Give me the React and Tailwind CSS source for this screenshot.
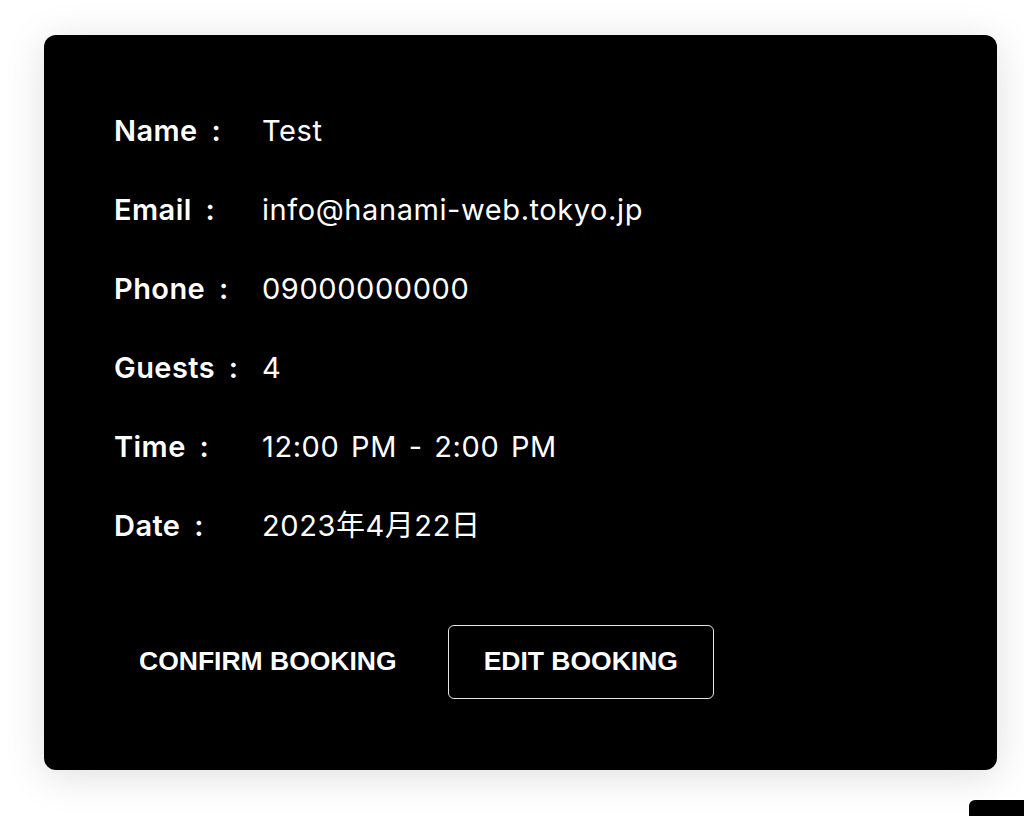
import React from "react";

const rows = [
  ["Name :", "Test"],
  ["Email :", "info@hanami-web.tokyo.jp"],
  ["Phone :", "09000000000"],
  ["Guests :", "4"],
  ["Time :", "12:00 PM - 2:00 PM"],
  ["Date :", "2023年4月22日"],
];

export default function App() {
  return (
    <div className="relative min-h-[816px] bg-white pt-[35px] pl-[44px] overflow-hidden">
      {/* Booking card */}
      <div className="w-[953px] h-[735px] rounded-xl bg-black text-white shadow-[0_6px_40px_rgba(0,0,0,0.13)] pt-[56px] pl-[70px] font-['Inter','Noto_Sans_CJK_JP',sans-serif]">
        <div className="flex flex-col">
          {rows.map(([label, value]) => (
            <div key={label} className="flex items-center h-[79px] text-[29px] tracking-[0.015em]">
              <span className="w-[148px] font-semibold [word-spacing:6px]">{label}</span>
              <span className="font-normal [word-spacing:3px] tracking-[0.02em]">{value}</span>
            </div>
          ))}
        </div>

        {/* Actions */}
        <div className="flex items-center gap-[15px] mt-[60px] ml-[-11px] font-['Liberation_Sans',Arial,sans-serif] font-bold text-[26.5px]">
          <button className="h-[74px] px-9 uppercase">Confirm Booking</button>
          <button className="h-[74px] px-[35px] uppercase border border-white/90 rounded-md">
            Edit Booking
          </button>
        </div>
      </div>

      {/* Floating element peeking in at bottom right */}
      <div className="absolute left-[969px] top-[800px] w-[80px] h-[40px] bg-black rounded-tl-md" />
    </div>
  );
}
